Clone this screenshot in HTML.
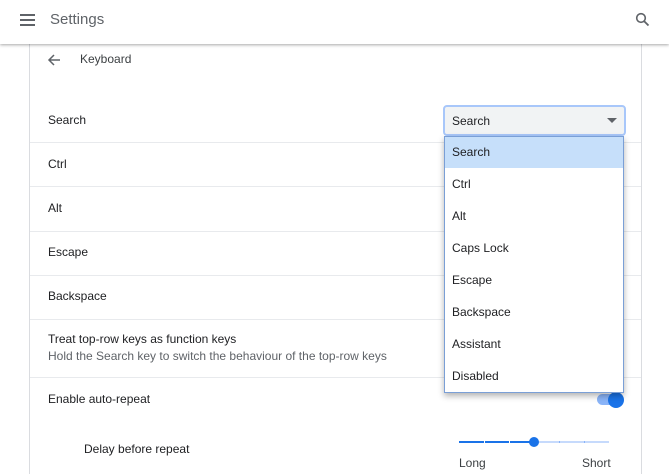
<!DOCTYPE html>
<html><head><style>
*{margin:0;padding:0;box-sizing:border-box}
body{width:669px;height:461px;overflow:hidden;background:#fff;font-family:"Liberation Sans",sans-serif;font-size:12px;color:#202124;position:relative}
.hdr{position:absolute;left:0;top:0;width:669px;height:44px;background:#fff;box-shadow:0 1px 3px rgba(0,0,0,.35);z-index:3}
.card{position:absolute;left:29px;top:44px;width:613px;height:430px;border-left:1px solid #dadce0;border-right:1px solid #dadce0;background:#fff}
.t{position:absolute;white-space:nowrap}
.div{position:absolute;left:30px;width:611px;height:1px;background:#e8eaed}
.sel{position:absolute;left:443px;top:105px;width:183px;height:31px;background:#f1f3f4;border:2px solid #a8c7fa;border-radius:4px;z-index:4}
.list{position:absolute;left:444px;top:136px;width:180px;height:257px;background:#fff;border:1px solid #7a9fd6;box-shadow:0 3px 6px rgba(0,0,0,.3);z-index:5}
.it{position:absolute;left:7px;font-size:12px}
.tk{position:absolute;top:441px;width:1px;height:2px;background:#fff}
</style></head><body>
<div class="hdr">
<div style="position:absolute;left:20px;top:14px;width:15px;height:2px;background:#5f6368;box-shadow:0 5px 0 #5f6368,0 10px 0 #5f6368"></div>
<div class="t" style="left:50px;top:11px;font-size:15px;color:#5f6368">Settings</div>
<svg style="position:absolute;left:635px;top:12px" width="16" height="16" viewBox="0 0 16 16"><circle cx="6" cy="6" r="4.3" fill="none" stroke="#5f6368" stroke-width="1.6"/><path d="M9.2 9.2L13.5 13.5" stroke="#5f6368" stroke-width="1.8"/></svg>
</div>
<div class="card"></div>
<svg style="position:absolute;left:47px;top:53px" width="14" height="14" viewBox="0 0 14 14"><path d="M13 7H2M7 2L2 7l5 5" fill="none" stroke="#5f6368" stroke-width="1.5"/></svg>
<div class="t" style="left:80px;top:52px;color:#3c4043">Keyboard</div>
<div class="t" style="left:48px;top:113px">Search</div>
<div class="div" style="top:142px"></div>
<div class="t" style="left:48px;top:157px">Ctrl</div>
<div class="div" style="top:186px"></div>
<div class="t" style="left:48px;top:201px">Alt</div>
<div class="div" style="top:231px"></div>
<div class="t" style="left:48px;top:245px">Escape</div>
<div class="div" style="top:275px"></div>
<div class="t" style="left:48px;top:289px">Backspace</div>
<div class="div" style="top:319px"></div>
<div class="t" style="left:48px;top:332px">Treat top-row keys as function keys</div>
<div class="t" style="left:48px;top:349px;color:#5f6368">Hold the Search key to switch the behaviour of the top-row keys</div>
<div class="div" style="top:377px"></div>
<div class="t" style="left:48px;top:392px">Enable auto-repeat</div>
<div class="t" style="left:84px;top:442px">Delay before repeat</div>
<div style="position:absolute;left:597px;top:394px;width:24px;height:11px;border-radius:6px;background:#8ab4f8"></div>
<div style="position:absolute;left:608px;top:392px;width:16px;height:16px;border-radius:50%;background:#1a73e8"></div>
<div style="position:absolute;left:459px;top:441px;width:75px;height:2px;background:#1a73e8"></div>
<div style="position:absolute;left:534px;top:441px;width:75px;height:2px;background:#c6dafc"></div>
<div class="tk" style="left:484px"></div><div class="tk" style="left:509px"></div><div class="tk" style="left:559px;background:#8ab4f8"></div><div class="tk" style="left:584px;background:#8ab4f8"></div>
<div style="position:absolute;left:529px;top:437px;width:10px;height:10px;border-radius:50%;background:#1a73e8"></div>
<div class="t" style="left:459px;top:456px;color:#3c4043">Long</div>
<div class="t" style="left:582px;top:456px;color:#3c4043">Short</div>
<div class="sel"><div class="t" style="left:7px;top:7px">Search</div>
<div style="position:absolute;left:162px;top:11px;width:0;height:0;border-left:5px solid transparent;border-right:5px solid transparent;border-top:5px solid #5f6368"></div></div>
<div class="list">
<div style="position:absolute;left:0;top:0;width:178px;height:31px;background:#c6dffa"></div>
<div class="it" style="top:8px">Search</div>
<div class="it" style="top:40px">Ctrl</div>
<div class="it" style="top:72px">Alt</div>
<div class="it" style="top:104px">Caps Lock</div>
<div class="it" style="top:136px">Escape</div>
<div class="it" style="top:168px">Backspace</div>
<div class="it" style="top:200px">Assistant</div>
<div class="it" style="top:232px">Disabled</div>
</div>
</body></html>
